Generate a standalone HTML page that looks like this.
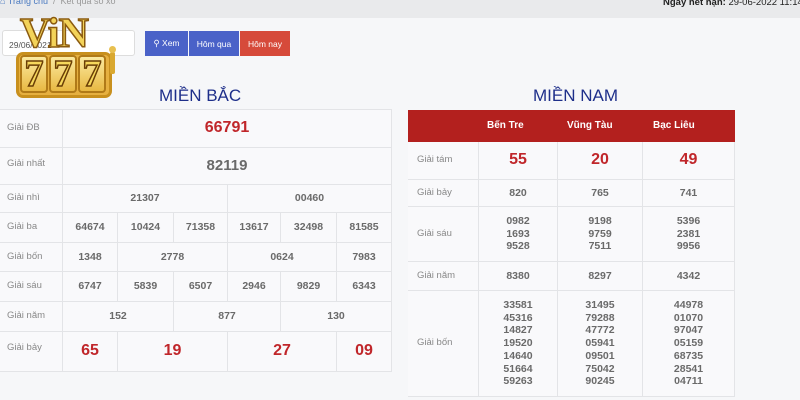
<!DOCTYPE html>
<html><head><meta charset="utf-8"><style>
*{margin:0;padding:0;box-sizing:border-box}
body{width:800px;height:400px;overflow:hidden;background:#f6f7f9;font-family:"Liberation Sans",sans-serif;position:relative;color:#666}
.a{position:absolute}
.c{position:absolute;border-right:1px solid #e3e4e7;border-bottom:1px solid #e3e4e7;background:#f9f9fb;display:flex;align-items:center;justify-content:center;font-size:10.5px;font-weight:bold;color:#6a6a6a;text-align:center;line-height:12.7px}
.l{justify-content:flex-start;padding-left:7px;font-weight:normal;color:#888;font-size:9.5px}
.r{color:#c0262a;font-size:16px}
.h{background:#b3201e;color:#fff;font-size:10px;border:none}
.t{font-size:17px;color:#1e2f8a;font-weight:normal}
.s{position:absolute;top:55px;width:28px;height:38px;border:2.5px solid #b07a18;border-radius:4px;background:linear-gradient(#fbeaa0,#e8b842);font-family:'Liberation Serif',serif;font-weight:bold;font-size:38px;line-height:34px;text-align:center;color:#f6d85c;-webkit-text-stroke:1.5px #6a3e06}
</style></head><body>
<div class="a" style="left:0;top:0;width:800px;height:18px;background:#e9eaec"></div>
<div class="a" style="left:0;top:-4px;font-size:9px;color:#4a7ac0;white-space:nowrap">&#8962; Trang chủ <span style="color:#999">&nbsp;/&nbsp; Kết quả số xổ</span></div>
<div class="a" style="left:663px;top:-3px;font-size:9.5px;font-weight:bold;color:#222;white-space:nowrap">Ngày hết hạn: <span style="font-weight:normal">29-06-2022 11:14</span></div>
<div class="a" style="left:2px;top:30px;width:133px;height:26px;background:#fff;border:1px solid #ddd;border-radius:3px;font-size:8.5px;color:#555;padding:9px 6px">29/06/2021</div>
<div class="a" style="left:145px;top:31px;width:43px;height:25px;background:#4a62c8;color:#fff;font-size:8.5px;display:flex;align-items:center;justify-content:center">&#9906; Xem</div>
<div class="a" style="left:189px;top:31px;width:50px;height:25px;background:#4a62c8;color:#fff;font-size:8.5px;display:flex;align-items:center;justify-content:center">Hôm qua</div>
<div class="a" style="left:240px;top:31px;width:50px;height:25px;background:#d64a3a;color:#fff;font-size:8.5px;display:flex;align-items:center;justify-content:center">Hôm nay</div>
<!-- logo -->
<div class="a" style="left:16px;top:52px;width:96px;height:46px;border:3px solid #c8901e;border-radius:7px;background:#e6b040"></div>
<div class="s" style="left:20px">7</div>
<div class="s" style="left:49px">7</div>
<div class="s" style="left:78px">7</div>
<div class="a" style="left:110px;top:52px;width:5px;height:22px;background:#d9a830;border-radius:2px"></div>
<div class="a" style="left:109px;top:46px;width:7px;height:7px;background:#e8c050;border-radius:50%"></div>
<div class="a" style="left:20px;top:10px;font-family:'Liberation Serif',serif;font-weight:bold;font-size:42px;color:#f3d35a;-webkit-text-stroke:1.5px #8a5a10;letter-spacing:-1px">ViN</div>
<div class="a t" style="left:159px;top:86px">MIỀN BẮC</div>
<div class="a t" style="left:533px;top:86px">MIỀN NAM</div>
<div class="a" style="left:0;top:109px;width:392px;height:263px;background:#f9f9fb;border-top:1px solid #e3e4e7"></div>
<!-- left table -->
<div class="c l" style="left:0;top:110px;width:63px;height:38px;align-items:flex-start;padding-top:12px">Giải ĐB</div>
<div class="c r" style="left:63px;top:110px;width:329px;height:38px">66791</div>
<div class="c l" style="left:0;top:148px;width:63px;height:37px;align-items:flex-start;padding-top:10px">Giải nhất</div>
<div class="c" style="left:63px;top:148px;width:329px;height:37px;font-size:15px">82119</div>
<div class="c l" style="left:0;top:185px;width:63px;height:28px">Giải nhì</div>
<div class="c" style="left:63px;top:185px;width:165px;height:28px">21307</div>
<div class="c" style="left:228px;top:185px;width:164px;height:28px">00460</div>
<div class="c l" style="left:0;top:213px;width:63px;height:30px">Giải ba</div>
<div class="c" style="left:63px;top:213px;width:55px;height:30px">64674</div>
<div class="c" style="left:118px;top:213px;width:56px;height:30px">10424</div>
<div class="c" style="left:174px;top:213px;width:54px;height:30px">71358</div>
<div class="c" style="left:228px;top:213px;width:53px;height:30px">13617</div>
<div class="c" style="left:281px;top:213px;width:56px;height:30px">32498</div>
<div class="c" style="left:337px;top:213px;width:55px;height:30px">81585</div>
<div class="c l" style="left:0;top:243px;width:63px;height:29px">Giải bốn</div>
<div class="c" style="left:63px;top:243px;width:55px;height:29px">1348</div>
<div class="c" style="left:118px;top:243px;width:110px;height:29px">2778</div>
<div class="c" style="left:228px;top:243px;width:109px;height:29px">0624</div>
<div class="c" style="left:337px;top:243px;width:55px;height:29px">7983</div>
<div class="c l" style="left:0;top:272px;width:63px;height:30px">Giải sáu</div>
<div class="c" style="left:63px;top:272px;width:55px;height:30px">6747</div>
<div class="c" style="left:118px;top:272px;width:56px;height:30px">5839</div>
<div class="c" style="left:174px;top:272px;width:54px;height:30px">6507</div>
<div class="c" style="left:228px;top:272px;width:53px;height:30px">2946</div>
<div class="c" style="left:281px;top:272px;width:56px;height:30px">9829</div>
<div class="c" style="left:337px;top:272px;width:55px;height:30px">6343</div>
<div class="c l" style="left:0;top:302px;width:63px;height:30px">Giải năm</div>
<div class="c" style="left:63px;top:302px;width:111px;height:30px">152</div>
<div class="c" style="left:174px;top:302px;width:107px;height:30px">877</div>
<div class="c" style="left:281px;top:302px;width:111px;height:30px">130</div>
<div class="c l" style="left:0;top:332px;width:63px;height:40px;align-items:flex-start;padding-top:10px">Giải bảy</div>
<div class="c r" style="left:63px;top:332px;width:55px;height:40px">65</div>
<div class="c r" style="left:118px;top:332px;width:110px;height:40px">19</div>
<div class="c r" style="left:228px;top:332px;width:109px;height:40px">27</div>
<div class="c r" style="left:337px;top:332px;width:55px;height:40px">09</div>
<!-- right table -->
<div class="c h" style="left:408px;top:110px;width:71px;height:32px"></div>
<div class="c h" style="left:479px;top:110px;width:79px;height:32px;justify-content:flex-start;padding-left:8px">Bến Tre</div>
<div class="c h" style="left:558px;top:110px;width:85px;height:32px;justify-content:flex-start;padding-left:9px">Vũng Tàu</div>
<div class="c h" style="left:643px;top:110px;width:92px;height:32px;justify-content:flex-start;padding-left:10px">Bạc Liêu</div>
<div class="c l" style="left:408px;top:142px;width:71px;height:38px;padding-left:9px">Giải tám</div>
<div class="c r" style="left:479px;top:142px;width:79px;height:38px">55</div>
<div class="c r" style="left:558px;top:142px;width:85px;height:38px">20</div>
<div class="c r" style="left:643px;top:142px;width:92px;height:38px">49</div>
<div class="c l" style="left:408px;top:180px;width:71px;height:27px;padding-left:9px">Giải bảy</div>
<div class="c" style="left:479px;top:180px;width:79px;height:27px">820</div>
<div class="c" style="left:558px;top:180px;width:85px;height:27px">765</div>
<div class="c" style="left:643px;top:180px;width:92px;height:27px">741</div>
<div class="c l" style="left:408px;top:207px;width:71px;height:55px;padding-left:9px">Giải sáu</div>
<div class="c" style="left:479px;top:207px;width:79px;height:55px">0982<br>1693<br>9528</div>
<div class="c" style="left:558px;top:207px;width:85px;height:55px">9198<br>9759<br>7511</div>
<div class="c" style="left:643px;top:207px;width:92px;height:55px">5396<br>2381<br>9956</div>
<div class="c l" style="left:408px;top:262px;width:71px;height:29px;padding-left:9px">Giải năm</div>
<div class="c" style="left:479px;top:262px;width:79px;height:29px">8380</div>
<div class="c" style="left:558px;top:262px;width:85px;height:29px">8297</div>
<div class="c" style="left:643px;top:262px;width:92px;height:29px">4342</div>
<div class="c l" style="left:408px;top:291px;width:71px;height:106px;padding-left:9px">Giải bốn</div>
<div class="c" style="left:479px;top:291px;width:79px;height:106px">33581<br>45316<br>14827<br>19520<br>14640<br>51664<br>59263</div>
<div class="c" style="left:558px;top:291px;width:85px;height:106px">31495<br>79288<br>47772<br>05941<br>09501<br>75042<br>90245</div>
<div class="c" style="left:643px;top:291px;width:92px;height:106px">44978<br>01070<br>97047<br>05159<br>68735<br>28541<br>04711</div>
</body></html>
